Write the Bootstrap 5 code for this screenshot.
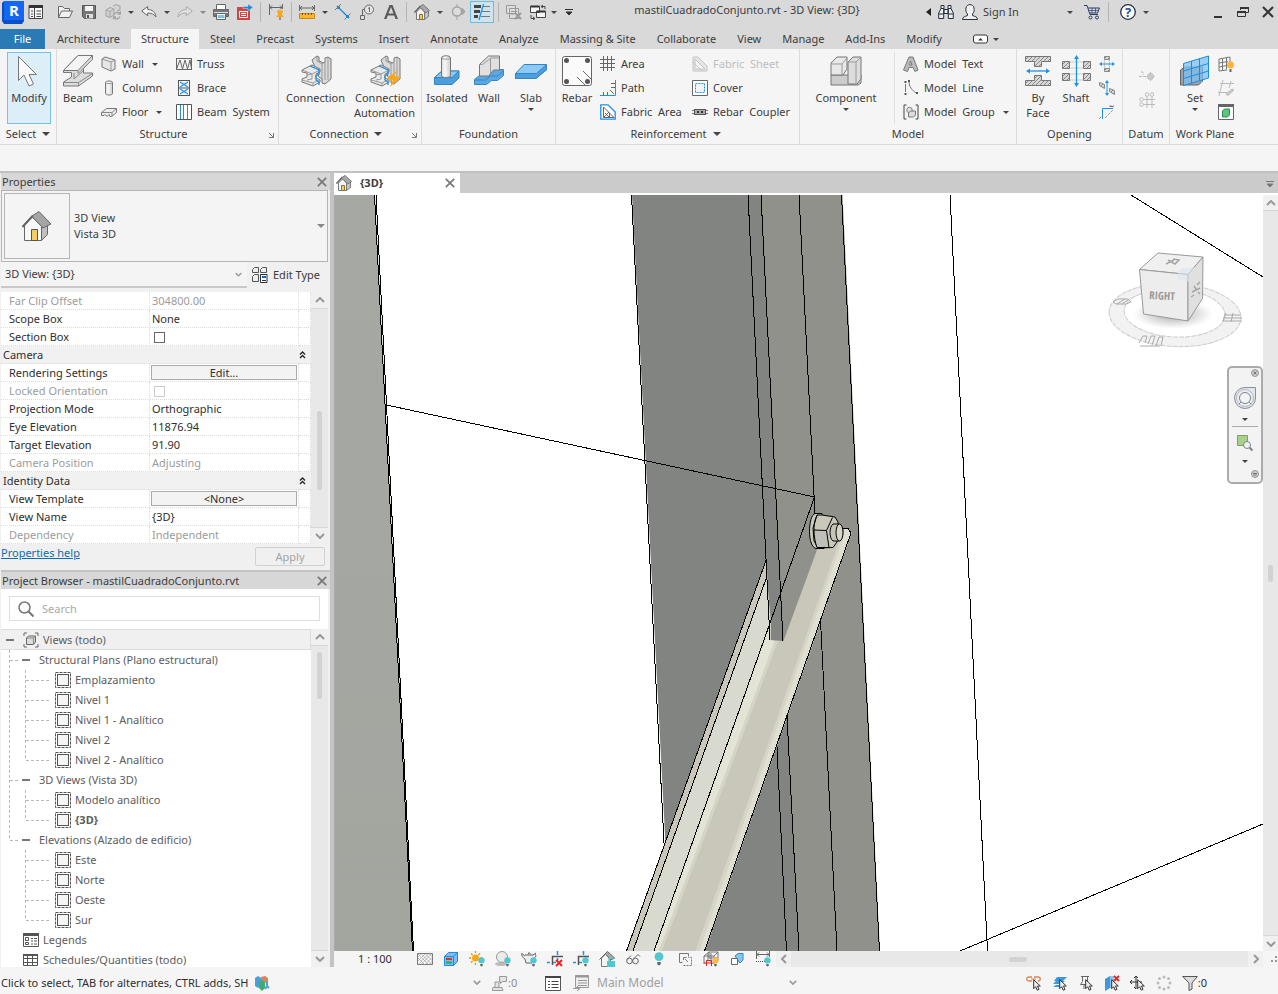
<!DOCTYPE html>
<html lang="en">
<head>
<meta charset="utf-8">
<meta name="viewport" content="width=device-width, initial-scale=1">
<title>mastilCuadradoConjunto.rvt - 3D View: {3D}</title>
<link href="https://cdn.jsdelivr.net/npm/bootstrap@5.3.0/dist/css/bootstrap.min.css" rel="stylesheet">
<style>
:root{--ui:"Noto Sans","Open Sans",sans-serif}
body{font:11px/16px var(--ui);color:#3c3c3c;background:#f5f5f5;height:100vh;overflow:hidden}
button,input,select{font:inherit;color:inherit}
button{background:none;border:0;padding:0}
svg{display:block;flex:none}
.i16{width:16px;height:16px}
.i32{width:32px;height:32px}
.tri{width:0;height:0;border:3px solid transparent;border-top:3px solid #444;border-bottom:0;flex:none}
.tri-lg{border-width:4px 4px 0}
.tri-dim{border-top-color:#888}
/* quick access bar */
.qat{background:#d9d9d9;height:29px;padding:0 0 5px 2px}
.qat .split{width:20px;height:20px;display:flex;align-items:center;justify-content:center}
.qat .slim{width:15px}
.vsep{width:1px;height:20px;background:#b4b4b4;margin:0 7px}
.on{width:24px;height:22px;background:#cfe3ee;border:1px solid #6fbbdc;display:flex;align-items:center;justify-content:center}
.g3{margin-left:4px}.g8{margin-left:8px}.g13{margin-left:13px}
.signin{width:82px;padding-left:5px;text-align:left}
.winbtns{margin-left:52px;gap:5px}
.winbtns button{width:20px;height:20px;display:flex;align-items:center;justify-content:center}
/* ribbon tabs */
.tabs{background:#d9d9d9;height:20px;gap:1px}
.tabs a{padding:0 10px;line-height:20px;color:#3c3c3c;text-decoration:none;white-space:nowrap}
.tabs a.file{background:#2a7ab5;color:#fff;width:45px;padding:0;text-align:center;margin-right:1px}
.tabs a.current{background:#f5f5f5}
/* ribbon panels */
.ribbon{height:96px;border-bottom:1px solid #dadada}
.pane{display:flex;flex-direction:column;padding-top:3px;position:relative;flex:none}
.pane+.pane{border-left:1px solid #dcdcdc}
.pane .tools{display:flex;height:72px;padding-left:2px}
.pane h2{font:inherit;margin:0;line-height:20px;display:flex;justify-content:center;align-items:center;gap:6px}
.launch{position:absolute;right:4px;bottom:6px}
.big{display:flex;flex-direction:column;align-items:center;padding-top:3px;line-height:15px;height:72px;flex:none}
.big svg{margin-bottom:3px}
.big .tri{margin-top:3px}
.stack{display:flex;flex-direction:column;flex:none}
.sm-tool{display:flex;align-items:center;height:24px;gap:5px;white-space:pre}
.off{color:#bdbdbd}
.modify{background:#dceef7;border:1px solid #79c1e0;margin-left:5px;width:44px;padding-top:2px}
.w56{width:56px}.w222{width:222px}.w143{width:143px}.w134{width:134px}.w244{width:244px}.w217{width:217px}.w106{width:106px}.w47{width:47px}.w71{width:71px}
.b38{width:38px}.b42{width:42px}.b69{width:69px}.b90{width:88px}
.c75{width:75px}.c95{width:96px}
.options{height:28px;border-bottom:2px solid #c0c0c0}
/* left docks */
.dock{width:334px;border-right:4px solid #c4c4c4;background:#f0f0f0;flex:none;padding-left:1px}
.dock-title{height:17px;background:#d7d7d7;line-height:16px;padding:0 3px 0 1px;flex:none}
.typebox{height:72px;border:1px solid #b4b4b4;background:#f4f4f4;padding:2px;margin-right:2px}
.thumb{width:66px;height:66px;border:1px solid #b4b4b4}
.combo{height:26px;width:246px;border:0;border-bottom:2px solid #c9c9c9;background:#f4f4f4;appearance:none;padding:0 4px;color:#3c3c3c}
.combo-wrap{position:relative}
.combo-wrap svg{position:absolute;right:5px;top:10px;pointer-events:none}
.edit-type{margin-left:5px;gap:5px}
.props{table-layout:fixed;width:310px;background:#fff;border-collapse:separate;border-spacing:0}
.props th,.props td{height:18px;padding:0 0 0 8px;font-weight:400;border-bottom:1px dotted #dcdcdc;border-right:1px dotted #dcdcdc;line-height:16px;color:#2e2e2e;white-space:nowrap}
.props td{padding-left:2px}
.props .off th,.props .off td{color:#9c9c9c}
.props .sec th{background:#f1f1f1;padding-left:2px;border-right:0}
.props .sec th:last-child{padding-left:0}
.props .namecol,.props .valcol{width:149px}
.props input{appearance:none;width:11px;height:11px;border:1px solid #666;background:#fff;display:block;margin:2px 0 0 2px}
.props input:disabled{border-color:#ccc}
.cellbtn{display:block;width:146px;height:15px;line-height:13px;border:1px solid #ababab;background:#f3f3f3;margin-left:-1px}
.bar{width:17px;background:#e8e8e8;flex:none;display:flex;flex-direction:column;align-items:center}
.bar .end{height:17px;width:100%;background:#f0f0f0;display:flex;align-items:center;justify-content:center;flex:none}
.bar .top{border-bottom:1px solid #d6d6d6}.bar .bot{border-top:1px solid #d6d6d6;margin-top:auto}
.bar i{width:5px;border-radius:3px;background:#d2d2d2}
.thumb-a{height:79px;margin-top:102px}
.thumb-b{height:47px;margin-top:6px}
.thumb-c{height:17px;margin-top:354px}
.helpline{height:26px;padding:1px 5px 0 0}
.helpline a{color:#0b6cb0}
.apply{width:70px;height:19px;border:1px solid #d0d0d0;border-radius:2px;color:#a4a4a4;margin-top:2px}
.browser{border-top:2px solid #c4c4c4;min-height:0}
.browser .body{min-height:0;margin-right:2px}
.search{margin:7px 8px 8px;height:25px;border:1px solid #dedede;background:#fff;padding:0 8px;gap:8px}
.search input{border:0;outline:0;width:100%;padding:0;background:none}
.search input::placeholder{color:#a8a8a8;opacity:1}
/* project tree */
.tree,.tree ul{list-style:none;margin:0;padding:0}
.tree{color:#5c5c5c;overflow:hidden}
.node{display:flex;align-items:center;height:20px;white-space:nowrap}
.root{background:#f0f0f0;border:1px solid #dcdcdc;border-left:0;padding-left:5px;height:21px}
.root svg.i16{margin:0 4px 0 9px}
.minus{width:8px;height:2px;background:#777;flex:none}
.grp{background:repeating-linear-gradient(#bbb 0 3px,transparent 3px 5px) 8px 0/1px 100% no-repeat}
.grp:last-child{background-size:1px 10px}
.grp>.node{padding-left:9px;background:repeating-linear-gradient(90deg,#bbb 0 3px,transparent 3px 5px) 9px 10px/9px 1px no-repeat}
.grp>.node .minus{margin:0 9px 0 12px}
.grp li{padding-left:54px;background:repeating-linear-gradient(#bbb 0 3px,transparent 3px 5px) 24px 0/1px 100% no-repeat,repeating-linear-gradient(90deg,#bbb 0 3px,transparent 3px 5px) 25px 10px/24px 1px no-repeat}
.grp li:last-child{background-size:1px 10px,24px 1px}
.grp li svg{margin-right:4px}
.leaf{padding-left:22px}
.leaf svg{margin-right:4px}
/* drawing area */
.fit{min-height:0;min-width:0}
.viewtabs{height:20px;background:#cbcbcb;margin-bottom:2px;flex:none}
.viewtab{width:126px;height:22px;background:#fff;padding:0 5px 2px 2px}
.stage{position:relative;background:#fff;overflow:hidden}
.stage>.scene{position:absolute;inset:0;width:100%;height:100%}
.cube{position:absolute;right:19px;top:51px}
.navbar-mini{position:absolute;right:0;top:171px;width:36px;height:118px;border:2px solid #ababab;border-radius:5px;background:#f3f3f3;display:flex;flex-direction:column;align-items:center}
.navbar-mini hr{width:26px;margin:5px 0 7px;border-top:1px solid #aaa;opacity:1}
.navbar-mini .corner{align-self:flex-end;margin-right:2px}
.navbar-mini .tri,.navbar-mini .wheel{margin-top:8px}
.bar-v{width:15px}
.bar-v .end{height:16px}
.viewbar{height:16px;background:#f5f5f5;flex:none}
.scale{width:78px;padding-left:24px;color:#2e2e2e}
.vtools{gap:10px;padding:0 5px}
.bar-h{background:#e8e8e8;height:16px}
.bar-h .end{width:15px;height:16px;background:#f0f0f0;display:flex;align-items:center;justify-content:center}
.bar-h i{height:5px;width:18px;border-radius:3px;background:#d2d2d2;margin-left:218px}
.grip{width:15px}
/* status bar */
.status{height:27px;padding:4px 0 0 1px;color:#2e2e2e;flex:none}
.hint{width:249px;white-space:nowrap}
.wset{width:211px}
.ws-count{width:53px;margin-left:11px;color:#8a8a8a}
.model-name{color:#a0a0a0;font-size:12px;max-width:192px}
.selbtns{gap:10px;padding-right:71px}
</style>
</head>
<body class="d-flex flex-column m-0">

<svg width="0" height="0" class="position-absolute" aria-hidden="true">
<defs>
<pattern id="hatch" width="4" height="4" patternUnits="userSpaceOnUse"><rect width="4" height="4" fill="#d8d8d8"/><path d="M0 4L4 0" stroke="#888"/></pattern>
<linearGradient id="metal"><stop offset="0" stop-color="#ddd"/><stop offset=".4" stop-color="#f8f8f8"/><stop offset="1" stop-color="#ccc"/></linearGradient>
<symbol id="view" viewBox="0 0 16 16"><rect x=".5" y=".5" width="15" height="15" fill="none" stroke="#555" stroke-dasharray="3 1"/><rect x="2.500" y="2.500" width="11" height="11" fill="#f5f5f5" stroke="#555"/></symbol>
<symbol id="home" viewBox="0 0 16 16"><path d="M2.500 8v7.500h8V8L6.500 4z" fill="#f4f4f4" stroke="#777"/><path d="M10.500 15.500l4-3V7l-4 1z" fill="#c4c4c4" stroke="#777"/><path d="M.5 8.500L6.500 2 9 .5l6.500 6-4 2.500L7 3.500" fill="#aaa" stroke="#777"/><path d="M.5 8.500l6-6.500" stroke="#666" stroke-width="1.300"/><path d="M5.500 15.500v-5h3v5z" fill="#f2cf63" stroke="#8a7330"/></symbol>
<symbol id="x" viewBox="0 0 10 10"><path d="M.8.800l8.400 8.400M9.200.800L.8 9.200" stroke="#777" stroke-width="1.700"/></symbol>
<symbol id="up" viewBox="0 0 10 6"><path d="M1 5l4-4 4 4" fill="none" stroke="#999" stroke-width="2"/></symbol>
<symbol id="down" viewBox="0 0 10 6"><path d="M1 1l4 4 4-4" fill="none" stroke="#999" stroke-width="2"/></symbol>
<symbol id="dbl" viewBox="0 0 7 8"><path d="M1 3.500L3.500 1 6 3.500M1 7l2.500-2.500L6 7" fill="none" stroke="#222" stroke-width="1.300"/></symbol>
<symbol id="launch" viewBox="0 0 6 6"><path d="M1 1l4 4M5.500 1v4.500H1" fill="none" stroke="#777"/></symbol>
<symbol id="bulb" viewBox="0 0 8 12"><circle cx="4" cy="4" r="3.800" fill="#4fc8d0"/><path d="M2.500 8.500h3v2l-1.500 1-1.500-1z" fill="#666"/></symbol>
<symbol id="bulby" viewBox="0 0 8 12"><circle cx="4" cy="4" r="3.800" fill="#fdb94a"/><path d="M2.500 8.500h3v2l-1.500 1-1.500-1z" fill="#666"/></symbol>
<symbol id="ptr" viewBox="0 0 8 12"><path d="M.7.700v9l2-2 1.500 3.500 1.800-.8L4.500 7h2.800z" fill="#eee" stroke="#333"/></symbol>
<symbol id="conn" viewBox="0 0 32 32">
 <path d="M12 5l5-4 2 1v4l5 2 1-1V3l3-1 3 2v20l-6 5-3-1v-4l-3-2z" fill="#dadada" stroke="#777"/>
 <path d="M17 2v4l5 3 3-2M22 9v16M25 7v18M28 3v22" fill="none" stroke="#999"/>
 <path d="M2 15l10-5 8 4v3l-4 2v4l4 2v2l-7 4-11-4v-3l5-2v-4l-5-1z" fill="#e9e9e9" stroke="#777"/>
 <path d="M2 15l10 4 8-4M7 20l5-1v5l-5 1M2 25l11 3 6-3M13 28v3" fill="none" stroke="#999"/>
 <path d="M10 11l9 4v4l-3 2v4l3 2v3" fill="none" stroke="#1e8be0" stroke-width="1.300"/></symbol>
</defs>
</svg>

<header>
<div class="qat d-flex align-items-center">
  <button aria-label="Revit"><svg width="22" height="23" viewBox="0 0 22 23"><path d="M0 2L2 0h20v20l-2 3H2l-2-3z" fill="#0b4fc4"/><path d="M2 0h20v19H2z" fill="#1467f2"/><text x="12" y="15" fill="#fff" text-anchor="middle" style="font:bold 15px 'Open Sans',sans-serif">R</text></svg></button>
  <button class="g3" aria-label="Home view"><svg class="i16" viewBox="0 0 16 16"><path d="M1 1.500h13.500v13H1z" fill="#fafafa" stroke="#444"/><path d="M1 1h14v3H1z" fill="#333"/><path d="M6.500 4v11M3 7h2M3 10h2M3 12.500h2M8.500 7H13M8.500 10H13M8.500 12.500H13" stroke="#444"/></svg></button>
  <button class="g13" aria-label="Open"><svg class="i16" viewBox="0 0 16 16"><path d="M1.500 13.500v-11h4l2 2h5v2.500" fill="#f1f1f1" stroke="#666"/><path d="M1.500 13.500L4.500 7h11l-3 6.500z" fill="#f1f1f1" stroke="#666"/></svg></button>
  <button class="g8" aria-label="Save"><svg class="i16" viewBox="0 0 16 16"><path d="M1.500 1.500h13v13h-11l-2-2z" fill="#777" stroke="#555"/><path d="M4 2h8v5H4z" fill="#f4f4f4"/><path d="M5 10h7v4.500H5z" fill="#ddd"/><path d="M6 11h2v3H6z" fill="#555"/></svg></button>
  <button class="g8" aria-label="Synchronize"><svg class="i16" viewBox="0 0 16 16" fill="#d0d0d0" stroke="#a4a4a4"><path d="M1 6l4-2.500 4 1.500v6l-4 2.500L1 12z M5 7.500v6M1 6l4 1.500L9 5"/><path d="M8 2l3-1.500L15 2v4l-3 1"/><path d="M9 11a3.500 3.500 0 0 1 6-1.500M15.500 7v3h-3M15 12.500a3.500 3.500 0 0 1-6 1M8.500 15.500V13H11" fill="none" stroke-width="1.300"/></svg></button>
  <button class="split" aria-label="Synchronize menu"><span class="tri"></span></button>
  <button aria-label="Undo"><svg class="i16" viewBox="0 0 16 16"><path d="M.7 7l6-4.500v3C11 5.500 14.500 8 15 13c-2-3-5-4-8.300-4v2.800z" fill="#f4f4f4" stroke="#666"/></svg></button>
  <button class="split" aria-label="Undo menu"><span class="tri"></span></button>
  <button aria-label="Redo"><svg class="i16" viewBox="0 0 16 16"><path d="M15.300 7l-6-4.500v3C5 5.500 1.500 8 1 13c2-3 5-4 8.300-4v2.800z" fill="#e0e0e0" stroke="#aaa"/></svg></button>
  <button class="split" aria-label="Redo menu"><span class="tri tri-dim"></span></button>
  <button aria-label="Print"><svg class="i16" viewBox="0 0 16 16"><path d="M3.500.500h9v5h-9z" fill="#fff" stroke="#666"/><path d="M.5 5.500h15v7H.5z" fill="#777" stroke="#666"/><path d="M1 8h14v1H1z" fill="#ddd"/><path d="M3.500 9.500h9v6h-9z" fill="#fff" stroke="#666"/><path d="M4.500 11h7v3h-7z" fill="#7cc4f0"/></svg></button>
  <button class="g8" aria-label="Export PDF"><svg class="i16" viewBox="0 0 16 16"><path d="M0 3h13v13H0z" fill="#cf4544"/><path d="M2.500 7.500h8v6h-8z" fill="none" stroke="#fff"/><path d="M4 9.500h5M4 11.500h5" stroke="#fff"/><path d="M6 2.500h5V0l5 3.500L11 7V4.500H6z" fill="#1688d8" stroke="#d9d9d9" stroke-width=".5"/></svg></button>
  <span class="vsep"></span>
  <button aria-label="Align dimension"><svg class="i16" viewBox="0 0 16 16"><path d="M1.500 0v11M14.500 0v5M2 3.500h12M4 1.500l-2 2 2 2M12 1.500l2 2-2 2" fill="none" stroke="#666"/><path d="M9 6.500h6v1.500l-1 1v2l1.500 1v1h-7v-1l1.500-1V9L9 8z" fill="#fda50f"/><path d="M12 13v3" stroke="#555"/></svg></button>
  <span class="vsep"></span>
  <button aria-label="Measure"><svg class="i16" viewBox="0 0 16 16"><path d="M.5 1v6M15.500 1v6M1 4h14M3 2L1 4l2 2M13 2l2 2-2 2" fill="none" stroke="#666"/><path d="M.5 9.500h15v5H.5z" fill="#fcb72f" stroke="#c98a18"/><path d="M3.500 9v2M6.500 9v2M9.500 9v2M12.500 9v2" stroke="#7a5208"/></svg></button>
  <button class="split" aria-label="Measure menu"><span class="tri"></span></button>
  <button aria-label="Aligned dimension"><svg class="i16" viewBox="0 0 16 16"><path d="M3 3l10 10" stroke="#1688d8" stroke-width="1.300"/><path d="M2 2l3 1-2 2zM14 14l-3-1 2-2z" fill="#1688d8" stroke="#1688d8"/><path d="M0 6l6-6M9.500 15.500l6-6" stroke="#777"/></svg></button>
  <button class="g8" aria-label="Tag"><svg class="i16" viewBox="0 0 16 16"><circle cx="10" cy="5.500" r="4.500" fill="#e6e6e6" stroke="#666"/><path d="M9 4.500l1.500-1V8M5.500 5.500H3.500v6" fill="none" stroke="#666"/><path d="M1.500 11.500h4v4h-4z" fill="#ddd" stroke="#666"/></svg></button>
  <button class="g8" aria-label="Text"><svg class="i16" viewBox="0 0 16 16"><path d="M1 15L6.500 1h3L15 15h-2.500l-1.300-3.500H4.800L3.500 15zM5.500 9.500h5L8 3z" fill="#5a5a5a" fill-rule="evenodd"/></svg></button>
  <span class="vsep"></span>
  <button aria-label="3D view"><svg class="i16"><use href="#home"/></svg></button>
  <button class="split" aria-label="3D view menu"><span class="tri"></span></button>
  <button aria-label="Section"><svg class="i16" viewBox="0 0 16 16"><circle cx="7" cy="7.500" r="4.500" fill="#ddd" stroke="#a4a4a4" stroke-width="1.500"/><path d="M7 0v3M7 12v4M12 4l3 3.500-3 3.500z" stroke="#a4a4a4" fill="#a4a4a4"/></svg></button>
  <button class="on g3" aria-label="Thin lines"><svg class="i16" viewBox="0 0 16 16"><path d="M0 2.500h7M0 7.500h6M0 12.500h4" stroke="#444" stroke-width="3"/><path d="M9 2.500h7M8 7.500h8M7 12.500h9" stroke="#777"/><path d="M9.500 0L5 16" stroke="#1e90e6" stroke-width="1.300"/></svg></button>
  <span class="vsep ms-1"></span>
  <button aria-label="Close inactive views"><svg class="i16" viewBox="0 0 16 16" fill="#ddd" stroke="#999"><path d="M.5 1.500h9v8h-9zM3.500 4.500h9v10h-9z"/><path d="M5 7.500h6M5 10h3"/><path d="M9 9l6 6M15 9l-6 6" stroke="#999" stroke-width="2"/></svg></button>
  <button class="g8" aria-label="Switch windows"><svg class="i16" viewBox="0 0 16 16"><path d="M.5 2.500h9v6h-9zM6.500 7.500h9v6h-9z" fill="#f5f5f5" stroke="#444"/><path d="M.5 2.500h9M6.500 7.500h9" stroke="#333" stroke-width="2"/><path d="M11 2.500h4V5M13 1l-2 1.500L13 4M4.500 14.500H1V11M3 13l2 1.500L3 16" fill="none" stroke="#444"/></svg></button>
  <button class="split slim" aria-label="Switch windows menu"><span class="tri"></span></button>
  <button class="split slim" aria-label="Customize"><svg width="8" height="7" viewBox="0 0 8 7"><path d="M0 .5h8M1 3h6L4 6z" stroke="#333" fill="#333"/></svg></button>
  <div class="flex-fill text-center pb-1 text-truncate">mastilCuadradoConjunto.rvt - 3D View: {3D}</div>
  <button class="split" aria-label="Collapse search"><svg width="5" height="8"><path d="M5 0v8L0 4z" fill="#222"/></svg></button>
  <button aria-label="Search"><svg class="i16" viewBox="0 0 16 16" fill="#eee" stroke="#222d40"><path d="M3 1.500h3v3H3zM10 1.500h3v3h-3zM3 4.500L.7 9v5.500h5V6L6 4.500zM13 4.500L15.300 9v5.500h-5V6L10 4.500zM6 5.500h4v4H6zM1 10h4.500M10.500 10H15"/></svg></button>
  <button class="g8" aria-label="Account"><svg class="i16" viewBox="0 0 16 16"><path d="M.5 15.500c0-3 3-3 5-4V10C4 8.500 3.500 6 4 4c.5-4.500 7.500-4.500 8 0 .5 2 0 4.500-1.500 6v1.500c2 1 5 1 5 4z" fill="#f0f0f0" stroke="#26303f"/></svg></button>
  <button class="signin">Sign In</button>
  <button class="split" aria-label="Account menu"><span class="tri"></span></button>
  <button class="g3" aria-label="App store"><svg class="i16" viewBox="0 0 16 16"><path d="M0 1.500h3L6 10.500h8M4 4h11.500l-2 5H5.500" fill="#d4dae8" stroke="#2c3a66"/><path d="M8 4v5M11.500 4v5M4.500 6.500h10" stroke="#2c3a66" stroke-width=".7"/><circle cx="6.500" cy="13.500" r="1.500" fill="#ddd" stroke="#2c3a66"/><circle cx="13" cy="13.500" r="1.500" fill="#ddd" stroke="#2c3a66"/></svg></button>
  <span class="vsep g8"></span><span></span>
  <button class="ms-1" aria-label="Help"><svg class="i16" viewBox="0 0 16 16"><circle cx="8" cy="8" r="7.300" fill="#fff" stroke="#26303f" stroke-width="1.300"/><text x="8" y="12.500" text-anchor="middle" fill="#1c4da8" style="font:bold 13px 'Open Sans',sans-serif">?</text></svg></button>
  <button class="split" aria-label="Help menu"><span class="tri"></span></button>
  <div class="winbtns d-flex">
    <button aria-label="Minimize"><svg width="10" height="12"><path d="M1 11h8" stroke="#333" stroke-width="2"/></svg></button>
    <button aria-label="Restore"><svg width="12" height="12"><path d="M3.500 4V1.500h8v5H9M.5 5.500h8v5h-8z" fill="none" stroke="#333"/><path d="M3 2h9M0 6h9" stroke="#333" stroke-width="2"/></svg></button>
    <button aria-label="Close"><svg width="12" height="12"><path d="M1 1l10 10M11 1L1 11" stroke="#333" stroke-width="2"/></svg></button>
  </div>
</div>

<nav class="tabs d-flex" aria-label="Ribbon tabs">
  <a href="#" class="file">File</a><a href="#">Architecture</a><a href="#" class="current">Structure</a><a href="#">Steel</a><a href="#">Precast</a><a href="#">Systems</a><a href="#">Insert</a><a href="#">Annotate</a><a href="#">Analyze</a><a href="#">Massing &amp; Site</a><a href="#">Collaborate</a><a href="#">View</a><a href="#">Manage</a><a href="#">Add-Ins</a><a href="#">Modify</a>
  <button class="d-flex align-items-center gap-1 ms-3 ps-1" aria-label="Ribbon display"><svg width="16" height="10"><rect x=".5" y="1" width="14" height="8" rx="2" fill="#fff" stroke="#333"/><path d="M5 6.500h5L7.500 4z" fill="#333"/></svg><span class="tri"></span></button>
</nav>

<div class="ribbon d-flex">
  <section class="pane w56">
    <div class="tools"><button class="big modify"><svg class="i32" viewBox="0 0 32 32"><path d="M5.500 1.500v24l5.500-5.500 5 11 4.500-2-4.500-9.500h7.500z" fill="#fafafa" stroke="#777"/></svg>Modify</button></div>
    <h2>Select <span class="tri tri-lg"></span></h2>
  </section>
  <section class="pane w222">
    <div class="tools">
      <button class="big b38 me-1"><svg class="i32" viewBox="0 0 32 32"><path d="M1.500 15.500L16 .5h14.500v4l-9 9v4.500h9v3L16.500 31h-15v-4l8-5v-4.500h-8z" fill="#dcdcdc" stroke="#777"/><path d="M1.500 15.500L16 .5h14.500L16 15.500z" fill="#f4f4f4" stroke="#777"/><path d="M16 15.500v3l14.500-14M12 18v6l9-8M1.500 27.500h15l14-9M16.500 27.500V31" fill="none" stroke="#888"/></svg>Beam</button>
      <div class="stack c75">
        <button class="sm-tool"><svg class="i16" viewBox="0 0 16 16"><path d="M1 3l3-2 10 3v9l-4 2-9-4z" fill="#e6e6e6" stroke="#777"/><path d="M1 3l9 3v9M10 6l4-2" fill="none" stroke="#999"/></svg>Wall <span class="tri"></span></button>
        <button class="sm-tool"><svg class="i16" viewBox="0 0 16 16"><path d="M4.500 2.500c0-2 7-2 7 0v11c0 2-7 2-7 0z" fill="url(#metal)" stroke="#777"/><path d="M4.500 2.500c0 1.500 7 1.500 7 0" fill="none" stroke="#999"/></svg>Column</button>
        <button class="sm-tool"><svg class="i16" viewBox="0 0 16 16"><path d="M.5 11.500v-3l5-4h10v4l-5 4H9l-1-2-2 2-2-2-1 1z" fill="#eee" stroke="#777"/><path d="M.5 8.500H11l4.500-4M11 8.500v4" fill="none" stroke="#888"/></svg>Floor <span class="tri"></span></button>
      </div>
      <div class="stack">
        <button class="sm-tool"><svg class="i16" viewBox="0 0 16 16"><path d="M0 2.500h16M0 13.500h16M.5 3v10L4 4l2.500 9L9 4l2.500 9L14 4l1.500 9V3" fill="none" stroke="#666"/></svg>Truss</button>
        <button class="sm-tool"><svg class="i16" viewBox="0 0 16 16"><path d="M2.500 0v16M13.500 0v16M2 8h12M2 .5h12M2 15.500h12" stroke="#555"/><path d="M4 2l8 5M12 2L4 7M4 9l8 5M12 9l-8 5" stroke="#1e90e6" stroke-width="1.300"/></svg>Brace</button>
        <button class="sm-tool"><svg class="i16" viewBox="0 0 16 16"><path d="M.5.500h15v15H.5z" fill="#fff" stroke="#555"/><path d="M4.500 1v14M11.500 1v14" stroke="#1e90e6"/><path d="M7.500 1v14" stroke="#1e90e6"/></svg>Beam  System</button>
      </div>
    </div>
    <h2 class="pe-2">Structure</h2><button class="launch" aria-label="Structural settings"><svg width="6" height="6"><use href="#launch"/></svg></button>
  </section>
  <section class="pane w143">
    <div class="tools">
      <button class="big b69"><svg class="i32"><use href="#conn"/></svg>Connection</button>
      <button class="big b69"><svg class="i32" viewBox="0 0 32 32"><use href="#conn" width="32" height="32"/><path d="M29 15L17 24l7 1-3 7 11-10-7-1z" fill="#fba613"/></svg>Connection<br>Automation</button>
    </div>
    <h2 class="pe-2">Connection <span class="tri tri-lg"></span></h2><button class="launch" aria-label="Connection settings"><svg width="6" height="6"><use href="#launch"/></svg></button>
  </section>
  <section class="pane w134">
    <div class="tools ps-1">
      <button class="big b42"><svg class="i32" viewBox="0 0 32 32"><path d="M3.500 22.500L11 16h17v7l-7 6.500H3.500z" fill="#4b9edd" stroke="#3a84bb"/><path d="M3.500 22.500L11 16h17l-7 6.500z" fill="#8cc9f4" stroke="#3a84bb"/><path d="M10.500 3c0-3 9-3 9 0v18c0 2-9 2-9 0z" fill="url(#metal)" stroke="#777"/><path d="M10.500 3c0 1.500 9 1.500 9 0" fill="none" stroke="#999"/></svg>Isolated</button>
      <button class="big b42"><svg class="i32" viewBox="0 0 32 32"><path d="M1.500 24.500l5-4h9l5-6h10v6l-6 5h-6l-5 4h-12z" fill="#5aa9e4" stroke="#3a84bb"/><path d="M1.500 25h11l5-4h7l6-5" fill="none" stroke="#3a84bb"/><path d="M6.500 9.500l9-8.500h11v14h-6l-5 6h-9z" fill="#e0e0e0" stroke="#777"/><path d="M6.500 9.500h3L18 3h8M17.500 4v14" fill="none" stroke="#999"/></svg>Wall</button>
      <button class="big b42"><svg class="i32" viewBox="0 0 32 32"><path d="M0 19L9 10h23v5L21 24H0z" fill="#4c9fdf"/><path d="M.5 18.500L9 9.500h22.500l-10 9z" fill="#8ccaf5" stroke="#2f86c6"/><path d="M.5 18.500v5H21l10.500-9v-5" fill="none" stroke="#3a84bb"/></svg>Slab<span class="tri"></span></button>
    </div>
    <h2>Foundation</h2>
  </section>
  <section class="pane w244">
    <div class="tools">
      <button class="big b38"><svg class="i32" viewBox="0 0 32 32"><rect x="1.500" y="1.500" width="29" height="29" rx="2" fill="#fafafa" stroke="#666"/><g fill="#555"><circle cx="5.500" cy="5.500" r="2.500"/><circle cx="26.500" cy="5.500" r="2.500"/><circle cx="5.500" cy="26.500" r="2.500"/><circle cx="26.500" cy="26.500" r="2.500"/></g><path d="M22 16l8 8M16 22l8 8" stroke="#666"/></svg>Rebar</button>
      <div class="stack ps-1 c95">
        <button class="sm-tool"><svg class="i16" viewBox="0 0 16 16"><path d="M3.500 0v15M7.500 0v15M11.500 0v15M0 3.500h15M0 7.500h15M0 11.500h15" stroke="#666"/></svg>Area</button>
        <button class="sm-tool"><svg class="i16" viewBox="0 0 16 16"><path d="M15.500 0v15.500H0" fill="none" stroke="#1e90e6"/><path d="M11 3.500h4M11 7.500h4M3.500 15v-3M7.500 15v-3M10 10l4 4" stroke="#666"/></svg>Path</button>
        <button class="sm-tool"><svg class="i16" viewBox="0 0 16 16"><path d="M.8 15.200V.800H8l7.200 7.200v7.200z" fill="#fff" stroke="#1e90e6" stroke-width="1.300"/><path d="M3.500 3v10.500H14L3.500 3M3.500 13.500L9 8M9.500 9v4.500M5 9l4 4" fill="none" stroke="#666"/></svg>Fabric  Area</button>
      </div>
      <div class="stack">
        <button class="sm-tool off" disabled><svg class="i16" viewBox="0 0 16 16"><path d="M1 15V1h5l9 9v5zM3 3v10h10zM1 6l9 9" fill="#e6e6e6" stroke="#c4c4c4"/></svg>Fabric  Sheet</button>
        <button class="sm-tool"><svg class="i16" viewBox="0 0 16 16"><path d="M.5.500h15v15H.5z" fill="#fff" stroke="#666"/><path d="M3.500 3.500h9v9h-9z" fill="#eef7ff" stroke="#1e90e6" stroke-dasharray="2 1"/></svg>Cover</button>
        <button class="sm-tool"><svg class="i16" viewBox="0 0 16 16"><path d="M0 6.500h3M0 9.500h3M13 6.500h3M13 9.500h3" stroke="#777"/><rect x="2.500" y="5.500" width="11" height="5" fill="#aaa" stroke="#555"/><path d="M5 8h2M9 8h2" stroke="#333" stroke-width="2"/></svg>Rebar  Coupler</button>
      </div>
    </div>
    <h2 class="pe-1">Reinforcement <span class="tri tri-lg"></span></h2>
  </section>
  <section class="pane w217">
    <div class="tools">
      <button class="big b90"><svg class="i32" viewBox="0 0 32 32"><path d="M1 20h30v8l-3 2H1z" fill="#ccc" stroke="#777"/><path d="M1 20V8l6-6h10v12l-4 6z" fill="#e8e8e8" stroke="#777"/><path d="M1 9h11l5-6M12 9v11" fill="none" stroke="#999"/><path d="M18 28V7l5-5h8v22l-4 5h-9z" fill="#ddd" stroke="#777"/><path d="M18 7h8l5-5M26 7v21" fill="none" stroke="#999"/></svg>Component<span class="tri"></span></button>
      <div class="stack border-start ms-1 ps-2">
        <button class="sm-tool"><svg class="i16" viewBox="0 0 16 16"><path d="M.5 14L6 1h4l5 13-3 1.500-2-4H6l-1.500 4zM7.500 5L6.500 9H9z" fill="#bbb" stroke="#777"/></svg>Model  Text</button>
        <button class="sm-tool"><svg class="i16" viewBox="0 0 16 16"><path d="M2.500 4v8M6 1c0 6 3 9 7 12" fill="none" stroke="#777"/><path d="M1.500 1h2v2h-2zM1.500 13h2v2h-2zM5 0h2v2H5zM13 12h2v2h-2z" fill="#555"/></svg>Model  Line</button>
        <button class="sm-tool"><svg class="i16" viewBox="0 0 16 16"><path d="M3.500 1H1v14h2.500M12.500 1H15v14h-2.500" fill="none" stroke="#444"/><circle cx="6.500" cy="6" r="2.800" fill="#ddd" stroke="#888"/><path d="M5.500 9l2-2h5v4l-2 2h-5z" fill="#ddd" stroke="#777"/></svg>Model  Group <span class="tri"></span></button>
      </div>
    </div>
    <h2>Model</h2>
  </section>
  <section class="pane w106">
    <div class="tools">
      <button class="big b38"><svg class="i32" viewBox="0 0 32 32"><path d="M3.500 1.500h25v5h-9v5h-7v-5h-9zM3.500 30.500h25v-5h-9v-5h-7v5h-9z" fill="url(#hatch)" stroke="#777"/><path d="M6 16h20" stroke="#1e90e6" stroke-width="1.300"/><path d="M4 16l4-2.500v5zM28 16l-4-2.500v5z" fill="#1e90e6"/></svg>By<br>Face</button>
      <button class="big b38"><svg class="i32" viewBox="0 0 32 32"><path d="M2.500 6.500h7v7h-7zM23.500 6.500h7v7h-7zM2.500 18.500h7v7h-7zM23.500 18.500h7v7h-7z" fill="url(#hatch)" stroke="#777"/><path d="M10 7h13M10 13h13M10 19h13M10 25h13" stroke="#ccc"/><path d="M16.500 3v26" stroke="#1e90e6" stroke-width="1.300"/><path d="M16.500 0L14 4h5zM16.500 32L14 28h5z" fill="#1e90e6"/></svg>Shaft</button>
      <div class="stack ms-1">
        <button class="sm-tool" aria-label="Wall opening"><svg class="i16" viewBox="0 0 16 16"><path d="M5.500.500h5v3h-5zM5.500 12.500h5v3h-5z" fill="url(#hatch)" stroke="#888"/><path d="M5.500 4v8M10.500 4v8" stroke="#ccc"/><path d="M2 8h12" stroke="#1e90e6"/><path d="M0 8l3-2v4zM16 8l-3-2v4z" fill="#1e90e6"/></svg></button>
        <button class="sm-tool" aria-label="Vertical opening"><svg class="i16" viewBox="0 0 16 16"><path d="M.5 2.500l5 2v4l-5-3zM10.500 8.500l5 2v4l-5-3z" fill="url(#hatch)" stroke="#888"/><path d="M8 2v12" stroke="#1e90e6"/><path d="M8 0L6 3h4zM8 16l-2-3h4z" fill="#1e90e6"/></svg></button>
        <button class="sm-tool" aria-label="Dormer opening"><svg class="i16" viewBox="0 0 16 16"><path d="M3.500 15V4.500H14" fill="none" stroke="#1e90e6"/><path d="M6 14l8-8M0 15l3-3M10 2h5l-2 1" stroke="#999" stroke-dasharray="3 1"/></svg></button>
      </div>
    </div>
    <h2>Opening</h2>
  </section>
  <section class="pane w47">
    <div class="tools flex-column align-items-center justify-content-center">
      <button class="sm-tool" aria-label="Level" disabled><svg class="i16" viewBox="0 0 16 16"><path d="M0 8.500h8M2 4h2v3" fill="none" stroke="#bbb" stroke-dasharray="3 1"/><path d="M11.500 4v9M7.500 8.500h8" stroke="#bbb"/><circle cx="11.500" cy="8.500" r="3" fill="#ccc" stroke="#bbb"/></svg></button>
      <button class="sm-tool" aria-label="Grid" disabled><svg class="i16" viewBox="0 0 16 16" fill="none" stroke="#bbb"><circle cx="8" cy="2.500" r="1.800"/><circle cx="13" cy="2.500" r="1.800"/><circle cx="2.500" cy="7.500" r="1.800"/><circle cx="2.500" cy="12.500" r="1.800"/><path d="M8 4.500V16M13 4.500V16M4.500 7.500H16M4.500 12.500H16"/></svg></button>
    </div>
    <h2>Datum</h2>
  </section>
  <section class="pane w71">
    <div class="tools">
      <button class="big b38 g3"><svg class="i32" viewBox="0 0 32 32"><path d="M1.500 15l4-3h18v14l-4 4h-18z" fill="#9aa2a9" stroke="#666"/><path d="M4.500 8.500l25-7.500v22l-25 7.500z" fill="#7cc0f2" fill-opacity=".75" stroke="#1e8be0"/><path d="M12.500 6v22M20.500 3.500v22M4.500 16l25-7.500M4.500 23.500L29.500 16" stroke="#1e8be0"/></svg>Set<span class="tri"></span></button>
      <div class="stack ms-1">
        <button class="sm-tool" aria-label="Show"><svg class="i16" viewBox="0 0 16 16"><path d="M1 3l11-2v5M1 3v12l8-1M4.500 2.500v12M8.500 1.500v12M1 7l9-1.500M1 11l8-1.500" fill="none" stroke="#777"/><circle cx="12.500" cy="9" r="3.500" fill="#fcb53a"/><path d="M11.500 13h2v3h-2z" fill="#666"/></svg></button>
        <button class="sm-tool" aria-label="Reference plane" disabled><svg class="i16" viewBox="0 0 16 16"><path d="M2 3.500h14M0 12.500h9M5 0L1 16M13 1l-2 7" fill="none" stroke="#bbb"/><path d="M8 14l6-5 2 1-6 5.500z" fill="#ccc" stroke="#bbb"/></svg></button>
        <button class="sm-tool" aria-label="Viewer"><svg class="i16" viewBox="0 0 16 16"><path d="M.5.500h15v15H.5z" fill="#fff" stroke="#666"/><path d="M0 0h16v3H0z" fill="#666"/><path d="M4.500 7l2-2h5v6l-2 2h-5z" fill="#5cc380" stroke="#2a8f55"/></svg></button>
      </div>
    </div>
    <h2>Work Plane</h2>
  </section>
</div>
<div class="options"></div>
</header>

<main class="d-flex flex-fill fit">
<aside class="dock d-flex flex-column">
  <section>
    <div class="dock-title d-flex justify-content-between align-items-center"><span>Properties</span><button aria-label="Close properties"><svg width="10" height="10"><use href="#x"/></svg></button></div>
    <div class="typebox d-flex align-items-center">
      <div class="thumb d-flex align-items-center justify-content-center"><svg class="i32" viewBox="0 0 32 32"><path d="M3.500 14v16.500h17V16L11 7z" fill="#f8f8f8" stroke="#666"/><path d="M20.500 30.500l6-6V12l-6 5z" fill="#c0c0c0" stroke="#666"/><path d="M1.500 16.500L11 6l7-4.500L30 14l-8 4L11.500 7z" fill="#a4a4a4" stroke="#666" stroke-linejoin="round"/><path d="M1.500 17L11.500 6" stroke="#666" stroke-width="2"/><path d="M10.500 30.500v-11h6v11z" fill="#f2cf63" stroke="#555"/></svg></div>
      <div class="ms-1 flex-fill">3D View<br>Vista 3D</div><span class="tri tri-lg tri-dim"></span>
    </div>
    <div class="d-flex align-items-center">
      <div class="combo-wrap"><select class="combo" aria-label="Instance"><option>3D View: {3D}</option></select><svg width="7" height="5" viewBox="0 0 10 6"><use href="#down" width="10" height="6"/></svg></div>
      <button class="d-flex align-items-center edit-type"><svg class="i16" viewBox="0 0 16 16"><path d="M.5 2.500l2-2h4v5h-6zM8.500 2.500l2-2h4v5h-6zM.5 9.500l2-2h4v7h-6z" fill="#eee" stroke="#555"/><path d="M8.500 7.500h6.500v8H8.500z" fill="#fff" stroke="#26303f"/><path d="M10 9h4v2h-4z" fill="#1c63b5"/><path d="M10 13.500h4" stroke="#333"/></svg>Edit Type</button>
    </div>
    <div class="d-flex pt-1">
      <table class="props">
        <colgroup><col class="namecol"><col class="valcol"><col></colgroup>
        <tr class="off"><th scope="row">Far Clip Offset</th><td>304800.00</td><td></td></tr>
        <tr><th scope="row">Scope Box</th><td>None</td><td></td></tr>
        <tr><th scope="row"><label for="sb">Section Box</label></th><td><input id="sb" type="checkbox"></td><td></td></tr>
        <tr class="sec"><th colspan="2">Camera</th><th><svg width="7" height="8"><use href="#dbl"/></svg></th></tr>
        <tr><th scope="row">Rendering Settings</th><td><button class="cellbtn">Edit...</button></td><td></td></tr>
        <tr class="off"><th scope="row"><label for="lo">Locked Orientation</label></th><td><input id="lo" type="checkbox" disabled></td><td></td></tr>
        <tr><th scope="row">Projection Mode</th><td>Orthographic</td><td></td></tr>
        <tr><th scope="row">Eye Elevation</th><td>11876.94</td><td></td></tr>
        <tr><th scope="row">Target Elevation</th><td>91.90</td><td></td></tr>
        <tr class="off"><th scope="row">Camera Position</th><td>Adjusting</td><td></td></tr>
        <tr class="sec"><th colspan="2">Identity Data</th><th><svg width="7" height="8"><use href="#dbl"/></svg></th></tr>
        <tr><th scope="row">View Template</th><td><button class="cellbtn">&lt;None&gt;</button></td><td></td></tr>
        <tr><th scope="row">View Name</th><td>{3D}</td><td></td></tr>
        <tr class="off"><th scope="row">Dependency</th><td>Independent</td><td></td></tr>
      </table>
      <div class="bar"><span class="end top"><svg width="10" height="6"><use href="#up"/></svg></span><i class="thumb-a"></i><span class="end bot"><svg width="10" height="6"><use href="#down"/></svg></span></div>
    </div>
    <div class="helpline d-flex justify-content-between align-items-start"><a href="#">Properties help</a><button class="apply" disabled>Apply</button></div>
  </section>
  <section class="browser d-flex flex-column flex-fill">
    <div class="dock-title d-flex justify-content-between align-items-center"><span>Project Browser - mastilCuadradoConjunto.rvt</span><button aria-label="Close browser"><svg width="10" height="10"><use href="#x"/></svg></button></div>
    <div class="body bg-white d-flex flex-column flex-fill">
      <label class="search d-flex align-items-center flex-shrink-0"><svg class="i16" viewBox="0 0 16 16"><circle cx="6.500" cy="6.500" r="5.500" fill="none" stroke="#777" stroke-width="1.500"/><path d="M10.500 10.500l5 5" stroke="#777" stroke-width="2"/></svg><input type="text" placeholder="Search" aria-label="Search"></label>
      <div class="d-flex flex-fill fit">
        <ul class="tree flex-fill">
          <li><div class="node root"><span class="minus"></span><svg class="i16" viewBox="0 0 16 16"><path d="M1 4V1h3M12 1h3v3M15 12v3h-3M4 15H1v-3" fill="none" stroke="#666"/><path d="M3.500 6l2-2h7v6l-2 2.500h-7z" fill="#ddd" stroke="#666"/><path d="M3.500 6h7v6M10.500 6l2-2" fill="none" stroke="#888"/></svg>Views (todo)</div>
            <ul>
              <li class="grp"><div class="node"><span class="minus"></span>Structural Plans (Plano estructural)</div>
                <ul><li class="node"><svg class="i16"><use href="#view"/></svg>Emplazamiento</li><li class="node"><svg class="i16"><use href="#view"/></svg>Nivel 1</li><li class="node"><svg class="i16"><use href="#view"/></svg>Nivel 1 - Analítico</li><li class="node"><svg class="i16"><use href="#view"/></svg>Nivel 2</li><li class="node"><svg class="i16"><use href="#view"/></svg>Nivel 2 - Analítico</li></ul></li>
              <li class="grp"><div class="node"><span class="minus"></span>3D Views (Vista 3D)</div>
                <ul><li class="node"><svg class="i16"><use href="#view"/></svg>Modelo analítico</li><li class="node"><svg class="i16"><use href="#view"/></svg><b>{3D}</b></li></ul></li>
              <li class="grp"><div class="node"><span class="minus"></span>Elevations (Alzado de edificio)</div>
                <ul><li class="node"><svg class="i16"><use href="#view"/></svg>Este</li><li class="node"><svg class="i16"><use href="#view"/></svg>Norte</li><li class="node"><svg class="i16"><use href="#view"/></svg>Oeste</li><li class="node"><svg class="i16"><use href="#view"/></svg>Sur</li></ul></li>
            </ul></li>
          <li class="node leaf"><svg class="i16" viewBox="0 0 16 16"><path d="M.5 1.500h15v13H.5z" fill="#fff" stroke="#555"/><path d="M0 2.500h16" stroke="#555" stroke-width="3"/><path d="M8 6.500h2M11 6.500h3M8 9h2M11 9h3M8 12h2M11 12h3" stroke="#555"/><path d="M2.500 5.500h3v3h-3zM2.500 10.500h3v2h-3z" fill="#fff" stroke="#555"/></svg>Legends</li>
          <li class="node leaf"><svg class="i16" viewBox="0 0 16 16"><path d="M.5 2.500h14v11H.5z" fill="#fff" stroke="#555"/><path d="M0 3h15" stroke="#555" stroke-width="2"/><path d="M0 6.500h15M0 10.500h15M4.500 3v10M9.500 3v10" stroke="#555"/></svg>Schedules/Quantities (todo)</li>
        </ul>
        <div class="bar"><span class="end top"><svg width="10" height="6"><use href="#up"/></svg></span><i class="thumb-b"></i><span class="end bot"><svg width="10" height="6"><use href="#down"/></svg></span></div>
      </div>
    </div>
  </section>
</aside>

<section class="d-flex flex-column flex-fill bg-white fit">
  <div class="viewtabs d-flex justify-content-between align-items-start">
    <div class="viewtab d-flex align-items-center"><svg class="i16"><use href="#home"/></svg><b class="ms-2 flex-fill">{3D}</b><button aria-label="Close view"><svg width="10" height="10"><use href="#x"/></svg></button></div>
    <button class="mt-1 pt-1 pe-1" aria-label="View list"><svg width="8" height="7" viewBox="0 0 8 7"><path d="M0 .5h8M1 3h6L4 6z" stroke="#777" fill="#777"/></svg></button>
  </div>
  <div class="d-flex flex-fill fit">
    <div class="stage flex-fill">
      <svg class="scene" viewBox="334 195 929 756" preserveAspectRatio="xMinYMin slice">
        <defs>
          <linearGradient id="wall" x1="0" y1="0" x2="0" y2="1"><stop offset="0" stop-color="#a6a8a3"/><stop offset="1" stop-color="#a3a59f"/></linearGradient>
        </defs>
        <path d="M334 195h41l38 756h-79z" fill="url(#wall)"/>
        <path d="M632 195h131l38 756H671z" fill="#828481"/>
        <path d="M761 195h81.500L880 951h-81z" fill="#90918a"/>
        <path d="M761.500 195L783.500 641h-13L748.500 195z" fill="#828481"/>
        <path d="M664.500 843L626.500 951H700V843z" fill="#fff"/>
        <!-- channel beam -->
        <path d="M766.500 559L626.500 951H705L851.500 533l-3-4.500h-22l-9 20L783.500 641l-13-1z" fill="#c9c7ba"/>
        <path d="M766.700 577L633 951h21L771 623z" fill="#d9dacf"/>
        <path d="M771 623L654 951h5L775 641l-4.500-1z" fill="#e3e4d6"/>
        <path d="M775 641L659 951h3L778 641z" fill="#d5d5c7"/>
        <path d="M845 528.500L699 951h6L851.500 533l-3-4.500z" fill="#dfe0d1"/>
        <path d="M842 533L695.500 951h3.500L845 533z" fill="#d5d4c6"/>
        <g fill="none" stroke="#000" shape-rendering="crispEdges">
          <path d="M334.500 195v756" stroke="#aaa"/>
          <path d="M374.500 195l38 756M376 195l10.500 210 27 546M386.500 405l428 92"/>
          <path d="M631.500 195l32.500 648M748 195l22 445M761 195l22 446M799 195l16 320M841.500 195l38 756"/>
          <path d="M820.500 620l16.500 331M787 716l12 235M777 747l9.500 204"/>
          <path d="M766.500 559L626.500 951M766.700 577L633 951M814.500 497l-44.500 126L654 951M840 528.500h8l3 4.500L704.500 951"/>
          <path d="M950 195L987.500 951M1131 195l132 82M960 951l303-127"/>
        </g>
        <!-- bolt -->
        <g stroke="#000">
          <path d="M815 513.500h7l2 35h-8c-4-1-6.500-8-6.500-17s2-17 5.500-18z" fill="#c9c7ba"/>
          <path d="M817 515h5l13 2 3 5-1 20-4 5.500-15 .5-4-7-1-13z" fill="#c9c8ba"/>
          <path d="M814 530l12.500.5 2.500 17h-12c-2-5-3-12-3-17.500z" fill="#bfc0b9"/>
          <path d="M814 530c0-8 2-14 4-15M826.500 530.500l6-13" fill="none"/>
          <path d="M833 524h6c5 2 5 15 0 17h-6c-4-3-4-14 0-17z" fill="#c4c4ba"/>
          <ellipse cx="839.500" cy="532.500" rx="3.500" ry="8.500" fill="#d6d5c8"/>
        </g>
      </svg>
      <svg class="cube" width="136" height="104" viewBox="1108 246 136 104">
        <defs><radialGradient id="shade"><stop offset="0" stop-color="#777" stop-opacity=".7"/><stop offset="1" stop-color="#999" stop-opacity="0"/></radialGradient></defs>
        <g transform="rotate(3 1175 315)"><path fill-rule="evenodd" d="M1109 315a66 31.500 0 1 0 132 0a66 31.500 0 1 0-132 0zM1124 313a50.500 24 0 1 0 101 0a50.500 24 0 1 0-101 0z" fill="#f2f2f2" stroke="#ccc" stroke-dasharray="5 1"/></g>
        <ellipse cx="1173" cy="314" rx="40" ry="15" fill="url(#shade)"/>
        <path d="M1139.500 269.500l18.500-16.500 45 4-15 17.500z" fill="#f0f0f0" stroke="#999"/>
        <path d="M1139.500 269.500l48.500 5V321l-44.500-7z" fill="#ededed" stroke="#999"/>
        <path d="M1188 274.500l15-17.500-.5 41.500L1188 321z" fill="#e0e0e0" stroke="#999"/>
        <path d="M1178 271l4-3h6l7-1-6 8v7l-11-2z" fill="#dce6ee" opacity=".6"/>
        <text x="1149" y="299" fill="#999" transform="rotate(3 1149 299)" style="font:bold 11px 'Open Sans Condensed','Open Sans',sans-serif">RIGHT</text>
        <g fill="none" stroke="#a5a5a5" stroke-width="1.500"><path d="M1166 264l8-4M1168 260l7 4 4-4-6-1M1192 292l8-4M1194 286l2 3M1191 297l3-2M1197 285l3-3M1198 292l2 2"/></g>
        <g fill="none" stroke="#aaa"><path d="M1113 302l5-3h10l3 3-5 2h-10zM1117 304l8-5M1122 304l6-4M1139 343l4-7h4l-2 7M1148 344l3-8h4l-3 9M1156 346l3-9h4l-2 9M1140 346h20M1224 315h17M1223 318h19M1222 321h20M1226 313l-3 8M1233 313l-2 9"/></g>
      </svg>
      <div class="navbar-mini" role="toolbar" aria-label="Navigation bar">
        <button class="corner" aria-label="Close navigation bar"><svg width="8" height="10"><circle cx="4" cy="5" r="3.500" fill="#ccc" stroke="#999"/><path d="M2.500 3.500l3 3M5.500 3.500l-3 3" stroke="#777"/></svg></button>
        <button class="wheel" aria-label="Steering wheel"><svg width="24" height="24"><path d="M12 1.500h10.500v10.500a10.500 10.500 0 1 1-10.500-10.500z" fill="#e4e7ee" stroke="#8a8f98"/><circle cx="12" cy="12" r="8.500" fill="#eceef2" stroke="#b4b8c0"/><circle cx="12" cy="12" r="5.500" fill="#f3f4f6" stroke="#7d838c"/><path d="M6 18l2-2M16 16l2 2" stroke="#7d838c"/></svg></button>
        <span class="tri"></span>
        <hr>
        <button aria-label="Zoom"><svg width="18" height="18"><path d="M1.500 1.500h10v10h-10z" fill="#a9d08b" stroke="#7da065"/><circle cx="11" cy="11" r="3.500" fill="#eef1f4" stroke="#7d838c"/><path d="M13.500 13.500l3 3" stroke="#7d838c" stroke-width="2"/></svg></button>
        <span class="tri"></span>
        <button class="corner mt-auto mb-1" aria-label="Navigation options"><svg width="8" height="8"><circle cx="4" cy="4" r="3.500" fill="#ccc" stroke="#999"/><path d="M2 3.500h4M2.500 5h3" stroke="#777"/></svg></button>
      </div>
    </div>
    <div class="bar bar-v"><span class="end top"><svg width="10" height="6"><use href="#up"/></svg></span><i class="thumb-c"></i><span class="end bot"><svg width="10" height="6"><use href="#down"/></svg></span></div>
  </div>
  <div class="viewbar d-flex align-items-center">
    <span class="scale">1 : 100</span>
    <div class="vtools d-flex">
      <button aria-label="Detail level"><svg class="i16" viewBox="0 0 16 16"><path d="M.5 2.500h15v11H.5z" fill="#fff" stroke="#777"/><path d="M1 6l3.500-3.500M1 10l7.500-7.500M1 13.500l11-11M4 13.500l11-11M8 13.500l7.500-7.500M12 13.500l3.500-3.500M12 2.500l3.500 3.500M8 2.500l7.500 7.500M4 2.500l11 11M1 3l10.500 10.500M1 7l6.500 6.500" stroke="#999" stroke-width=".7"/></svg></button>
      <button aria-label="Visual style"><svg class="i16" viewBox="0 0 16 16"><path d="M1.500 5.500l4-4h9v9l-4 4h-9z" fill="#7cbdf0" stroke="#1c8be0"/><path d="M1.500 5.500h9v9M10.500 5.500l4-4" fill="none" stroke="#1c8be0"/><path d="M3 8h6" stroke="#d32" stroke-width="2"/><path d="M3 11.500h6" stroke="#2a5" stroke-width="2"/></svg></button>
      <button aria-label="Sun path"><svg class="i16" viewBox="0 0 16 16"><circle cx="6.500" cy="7" r="3.500" fill="#fca616"/><path d="M6.500 0v2M6.500 12v2M0 7h2M11 7h2M2 2.500l1.500 1.500M11 2.500L9.500 4M2 11.500l1.500-1.500" stroke="#e9930a" stroke-width="1.300"/><use href="#bulb" x="9" y="6" width="7" height="10"/></svg></button>
      <button aria-label="Shadows"><svg class="i16" viewBox="0 0 16 16"><ellipse cx="6" cy="13" rx="6" ry="2" fill="#bbb"/><circle cx="7" cy="6" r="5.500" fill="#eaeaea" stroke="#999"/><use href="#bulb" x="9" y="6" width="7" height="10"/></svg></button>
      <button aria-label="Rendering dialog"><svg class="i16" viewBox="0 0 16 16"><path d="M4 4h8l3-2M4 5L.7 2.500C0 4 2 7 4 8l1 4h6l1-4c2-1 4-3 2-5M7 3.500l1-2 2 2" fill="#eee" stroke="#666"/><use href="#bulb" x="9" y="6" width="7" height="10"/></svg></button>
      <button aria-label="Crop view"><svg class="i16" viewBox="0 0 16 16"><path d="M5.500 14V5.500H16" fill="none" stroke="#555" stroke-width="1.500"/><path d="M10.500 0v4M10.500 7v3M0 11.500h3M6 11.500h3" stroke="#1e90e6" stroke-width="1.500"/><path d="M9 9l6 6M15 9l-6 6" stroke="#e22" stroke-width="2"/></svg></button>
      <button aria-label="Show crop region"><svg class="i16" viewBox="0 0 16 16"><path d="M5.500 14V5.500H16" fill="none" stroke="#555" stroke-width="1.500"/><path d="M10.500 0v4M0 11.500h3M6 11.500h3" stroke="#1e90e6" stroke-width="1.500"/><use href="#bulb" x="9" y="6" width="7" height="10"/></svg></button>
      <button aria-label="Lock view"><svg class="i16" viewBox="0 0 16 16"><path d="M2.500 7v8.500h9V7L7 3z" fill="#f4f4f4" stroke="#777"/><path d="M.5 8.500L8.500.5l7 6.500-4 2L7 3.500" fill="#aaa" stroke="#666"/><path d="M8 10h8v6H8z" fill="#4fc8d0"/><path d="M10 10V8.500c0-2 4-2 4 0" fill="none" stroke="#4fc8d0" stroke-width="1.300"/></svg></button>
      <button aria-label="Temporary hide"><svg class="i16" viewBox="0 0 16 16" fill="none" stroke="#666"><circle cx="4.500" cy="10" r="2.800"/><circle cx="10.500" cy="10" r="2.800"/><path d="M2 8.500l4-4M8 8.500l5-5 2 2"/></svg></button>
      <button aria-label="Reveal hidden"><svg class="i16" viewBox="0 0 16 16"><use href="#bulb" x="3" y="1" width="10" height="14"/></svg></button>
      <button aria-label="Temporary view properties"><svg class="i16" viewBox="0 0 16 16" fill="none" stroke="#777"><path d="M2.500 2.500h9v3M2.500 2.500v9h3"/><path d="M6.500 9v-2.500h3"/><path d="M6.500 14.500h8v-8h-3" stroke-dasharray="2 1"/><path d="M8 8l3 3"/></svg></button>
      <button aria-label="Analytical model"><svg class="i16" viewBox="0 0 16 16"><path d="M1 5l5-4h9v8M1 5h10v8M5 2v8M8 2v10M1 5v8M11 5l4-4M6 1v6h9" fill="none" stroke="#777"/><path d="M3.500 15V9.500h5V15M1 12h9" fill="none" stroke="#d22"/><use href="#bulby" x="9" y="6" width="7" height="10"/></svg></button>
      <button aria-label="Displacement"><svg class="i16" viewBox="0 0 16 16"><path d="M6 5l3-2.500h5V9l-3 3z" fill="#8cc5ee" stroke="#2e86c6"/><path d="M2.500 7.500h6v6h-6z" fill="#fff" stroke="#666"/></svg></button>
      <button aria-label="Constraints"><svg class="i16" viewBox="0 0 16 16"><path d="M1.500 0v8M14.500 0v6M2 3.500h12M4 1.500l-2 2 2 2M12 1.500l2 2-2 2" fill="none" stroke="#666"/><path d="M1 10.500h9" stroke="#555" stroke-dasharray="1 1"/><use href="#bulb" x="9" y="6" width="7" height="10"/></svg></button>
    </div>
    <div class="bar-h d-flex flex-fill align-items-center"><span class="end"><svg width="6" height="10"><path d="M5 1L1 5l4 4" fill="none" stroke="#999" stroke-width="2"/></svg></span><i></i><span class="end ms-auto"><svg width="6" height="10"><path d="M1 1l4 4-4 4" fill="none" stroke="#999" stroke-width="2"/></svg></span></div>
    <span class="grip d-flex justify-content-end align-items-end"><svg width="8" height="8"><path d="M5 1h2v2H5zM1 5h2v2H1zM5 5h2v2H5z" fill="#999"/></svg></span>
  </div>
</section>
</main>

<footer class="status d-flex align-items-center">
  <span class="hint">Click to select, TAB for alternates, CTRL adds, SH</span>
  <button class="ms-1" aria-label="Worksharing"><svg class="i16" viewBox="0 0 16 16"><path d="M1 3l3-2 3 2v8l-3 2-3-2z" fill="#4d9fdc"/><path d="M7 2l4-1 3 2v3L11 8 7 6z" fill="#d98557"/><path d="M5 7l3-2 3 2v6l-3 3-3-3z" fill="#3eae6d"/><path d="M11 14l2-3 2 2M13 6v5" fill="none" stroke="#4d9fdc" stroke-width="2"/></svg></button>
  <div class="wset d-flex justify-content-end"><svg width="8" height="5" viewBox="0 0 10 6"><use href="#down" width="10" height="6"/></svg></div>
  <button class="d-flex align-items-center ws-count"><svg class="i16" viewBox="0 0 16 16" fill="#e4e4e4" stroke="#999"><path d="M7.500 1.500h7v5h-4l-2 2v-2h-1zM3 12v-5h4v5M1 12.500h9l1 3H0z"/></svg>:0</button>
  <button aria-label="Design options"><svg class="i16" viewBox="0 0 16 16"><path d="M.5 1.500h15v14H.5z" fill="#fff" stroke="#555"/><path d="M0 2h16" stroke="#444" stroke-width="2"/><path d="M3 6.500h2M3 9.500h2M3 12.500h2M6.500 6.500h7M6.500 9.500h7M6.500 12.500h7" stroke="#444"/></svg></button>
  <button class="ms-2 ps-1" aria-label="Add to set"><svg class="i16" viewBox="0 0 16 16"><path d="M2.500.500h13v12h-13z" fill="#eee" stroke="#999"/><path d="M2 1.500h14" stroke="#999" stroke-width="2"/><path d="M5 5.500h9M5 8h9M5 10.500h9M0 13.500h6M4 11l3 2.500L4 16" stroke="#999" fill="none"/></svg></button>
  <span class="ms-2 flex-fill model-name">Main Model</span>
  <svg width="8" height="5" viewBox="0 0 10 6"><use href="#down" width="10" height="6"/></svg>
  <div class="selbtns d-flex ms-auto align-items-center">
    <button aria-label="Select links"><svg class="i16" viewBox="0 0 16 16"><path d="M6 6H3C0 6 0 2 3 2h3M8 2h4c3 0 3 4 0 4" fill="none" stroke="#dd8452" stroke-width="1.300"/><path d="M5 4h5" stroke="#dd8452"/><use href="#ptr" x="7" y="4" width="8" height="12"/></svg></button>
    <button aria-label="Select underlay"><svg class="i16" viewBox="0 0 16 16"><path d="M5 2h10l-4 4H2zM4 6h9l-4 3H1zM4 10h6l-3 2H1z" fill="#3e96db"/><use href="#ptr" x="7" y="4" width="8" height="12"/></svg></button>
    <button aria-label="Select pinned"><svg class="i16" viewBox="0 0 16 16"><path d="M3 1.500h8M4.500 1.500v5l-2 3h8M6 9.500V14M9.500 2v4" fill="none" stroke="#666"/><use href="#ptr" x="7" y="4" width="8" height="12"/></svg></button>
    <button aria-label="Select by face"><svg class="i16" viewBox="0 0 16 16"><path d="M1 4l5-3v12l-5 3z" fill="#3e96db"/><path d="M6 1h4v12H6z" fill="#8cc5ee"/><path d="M10 1l5 5M15 1l-5 5" stroke="#e22" stroke-width="1.800"/><use href="#ptr" x="7" y="4" width="8" height="12"/></svg></button>
    <button aria-label="Drag elements"><svg class="i16" viewBox="0 0 16 16"><path d="M6 1v13M0 7h12M4 3l2-2 2 2M2 5L0 7l2 2M4 12l2 2" fill="none" stroke="#333"/><use href="#ptr" x="7" y="4" width="8" height="12"/></svg></button>
    <button aria-label="Background processes"><svg class="i16" viewBox="0 0 16 16" fill="#bbb"><circle cx="8" cy="2" r="1.500"/><circle cx="12.500" cy="3.500" r="1.500"/><circle cx="14" cy="8" r="1.500"/><circle cx="12.500" cy="12.500" r="1.500"/><circle cx="8" cy="14" r="1.500"/><circle cx="3.500" cy="12.500" r="1.500"/><circle cx="2" cy="8" r="1.500"/><circle cx="3.500" cy="3.500" r="1.500"/></svg></button>
    <button class="d-flex align-items-center"><svg class="i16" viewBox="0 0 16 16"><path d="M.7 1.500h14.600L10 8v6l-3 1.500V8z" fill="#ddd" stroke="#555"/></svg>:0</button>
  </div>
</footer>
<script src="https://cdn.jsdelivr.net/npm/bootstrap@5.3.0/dist/js/bootstrap.bundle.min.js"></script>
</body>
</html>
